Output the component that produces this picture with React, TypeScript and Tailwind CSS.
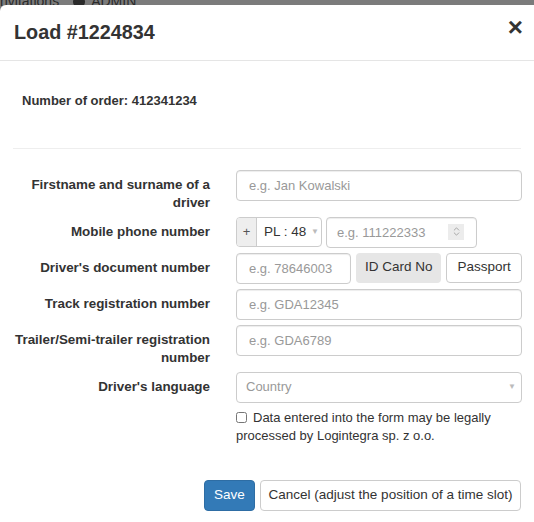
import { ChevronsUpDown } from "lucide-react";

const font = { fontFamily: '"Liberation Sans", Arial, sans-serif' };

function Label({ children }: { children: React.ReactNode }) {
  return (
    <label className="pt-[6px] text-right text-[13.4px] font-bold leading-[18px] text-[#333]">
      {children}
    </label>
  );
}

function TextInput({ placeholder, className = "" }: { placeholder: string; className?: string }) {
  return (
    <input
      type="text"
      placeholder={placeholder}
      className={`h-[31px] rounded-[4px] border border-[#ccc] bg-white px-3 text-[13px] text-[#555] placeholder:text-[#999] shadow-[inset_0_1px_1px_rgba(0,0,0,0.075)] outline-none ${className}`}
    />
  );
}

export default function App() {
  return (
    <div className="relative h-[522px] w-[534px] overflow-hidden bg-[#7b7b7b]" style={font}>
      {/* page behind the overlay */}
      <div className="absolute left-0 top-[-9px] flex items-center gap-[14px] text-[14px] text-[#2a2a2a]">
        <span>nvitations</span>
        <span className="flex items-center gap-[6px]">
          <span className="inline-block h-[12px] w-[12px] rounded-full bg-[#2a2a2a]" />
          ADMIN
        </span>
      </div>

      <div className="absolute inset-x-0 bottom-0 top-[5px] rounded-tl-[6px] bg-white text-[#333]">
        {/* header */}
        <div className="flex h-[56px] items-center justify-between border-b border-[#e5e5e5] pl-[14px] pr-[11px]">
          <h4 className="text-[19.8px] font-bold text-[#333]">Load #1224834</h4>
          <button className="pb-[12px] text-[26px] font-bold leading-none text-[#333]">×</button>
        </div>

        {/* body */}
        <div className="px-[13px]">
          <div className="pl-[9px] pt-[30px] text-[13px] font-bold text-[#333]">
            Number of order: 412341234
          </div>
          <hr className="mx-0 mt-[37px] border-t border-[#eee]" />

          <form className="mt-[21px] grid grid-cols-[197px_286px] gap-x-[26px] gap-y-[5px]">
            <Label>
              Firstname and surname of a
              <br />
              driver
            </Label>
            <div>
              <TextInput placeholder="e.g. Jan Kowalski" className="w-full" />
            </div>

            <Label>Mobile phone number</Label>
            <div className="flex items-center gap-[4px]">
              <div className="flex h-[30px] w-[86px] overflow-hidden rounded-[4px] border border-[#ccc]">
                <span className="flex w-[20px] items-center justify-center border-r border-[#ccc] bg-[#eee] text-[13px] text-[#555]">
                  +
                </span>
                <span className="flex flex-1 items-center justify-between pl-[7px] pr-[2px] text-[13.5px] text-[#333]">
                  PL : 48
                  <span className="text-[8px] text-[#bbb]">▼</span>
                </span>
              </div>
              <div className="relative">
                <TextInput placeholder="e.g. 111222333" className="w-[151px] !pl-[10px]" />
                <span className="absolute right-[13px] top-[7px] flex h-[16px] w-[16px] items-center justify-center bg-[#ececec] text-[#888]">
                  <ChevronsUpDown size={11} strokeWidth={1.5} />
                </span>
              </div>
            </div>

            <Label>Driver's document number</Label>
            <div className="flex gap-[5px]">
              <TextInput placeholder="e.g. 78646003" className="w-[115px]" />
              <button type="button" className="h-[30px] w-[86px] rounded-[4px] bg-[#e6e6e6] text-[13.5px] text-[#333]">
                ID Card No
              </button>
              <button type="button" className="h-[30px] w-[76px] rounded-[4px] border border-[#ccc] bg-white text-[13.5px] text-[#333]">
                Passport
              </button>
            </div>

            <Label>Track registration number</Label>
            <div>
              <TextInput placeholder="e.g. GDA12345" className="w-full" />
            </div>

            <Label>
              Trailer/Semi-trailer registration
              <br />
              number
            </Label>
            <div>
              <TextInput placeholder="e.g. GDA6789" className="w-full" />
            </div>

            <Label>Driver's language</Label>
            <div>
              <div className="flex h-[31px] w-full items-center justify-between rounded-[4px] border border-[#ccc] pl-[9px] pr-[5px] text-[13px] text-[#999]">
                Country
                <span className="text-[8px] text-[#bbb]">▼</span>
              </div>
              <label className="mt-[6px] block text-[13px] leading-[18px] text-[#333]">
                <input type="checkbox" className="mr-[6px] h-[11px] w-[11px] align-[-1px]" />
                Data entered into the form may be legally processed by Logintegra sp. z o.o.
              </label>
            </div>
          </form>

          <div className="mt-[35px] flex justify-end gap-[5px]">
            <button className="h-[31px] w-[51px] rounded-[4px] border border-[#2e6da4] bg-[#337ab7] text-[13.5px] text-white">
              Save
            </button>
            <button className="h-[31px] w-[261px] rounded-[4px] border border-[#ccc] bg-white text-[13.5px] text-[#333]">
              Cancel (adjust the position of a time slot)
            </button>
          </div>
        </div>
      </div>
    </div>
  );
}
